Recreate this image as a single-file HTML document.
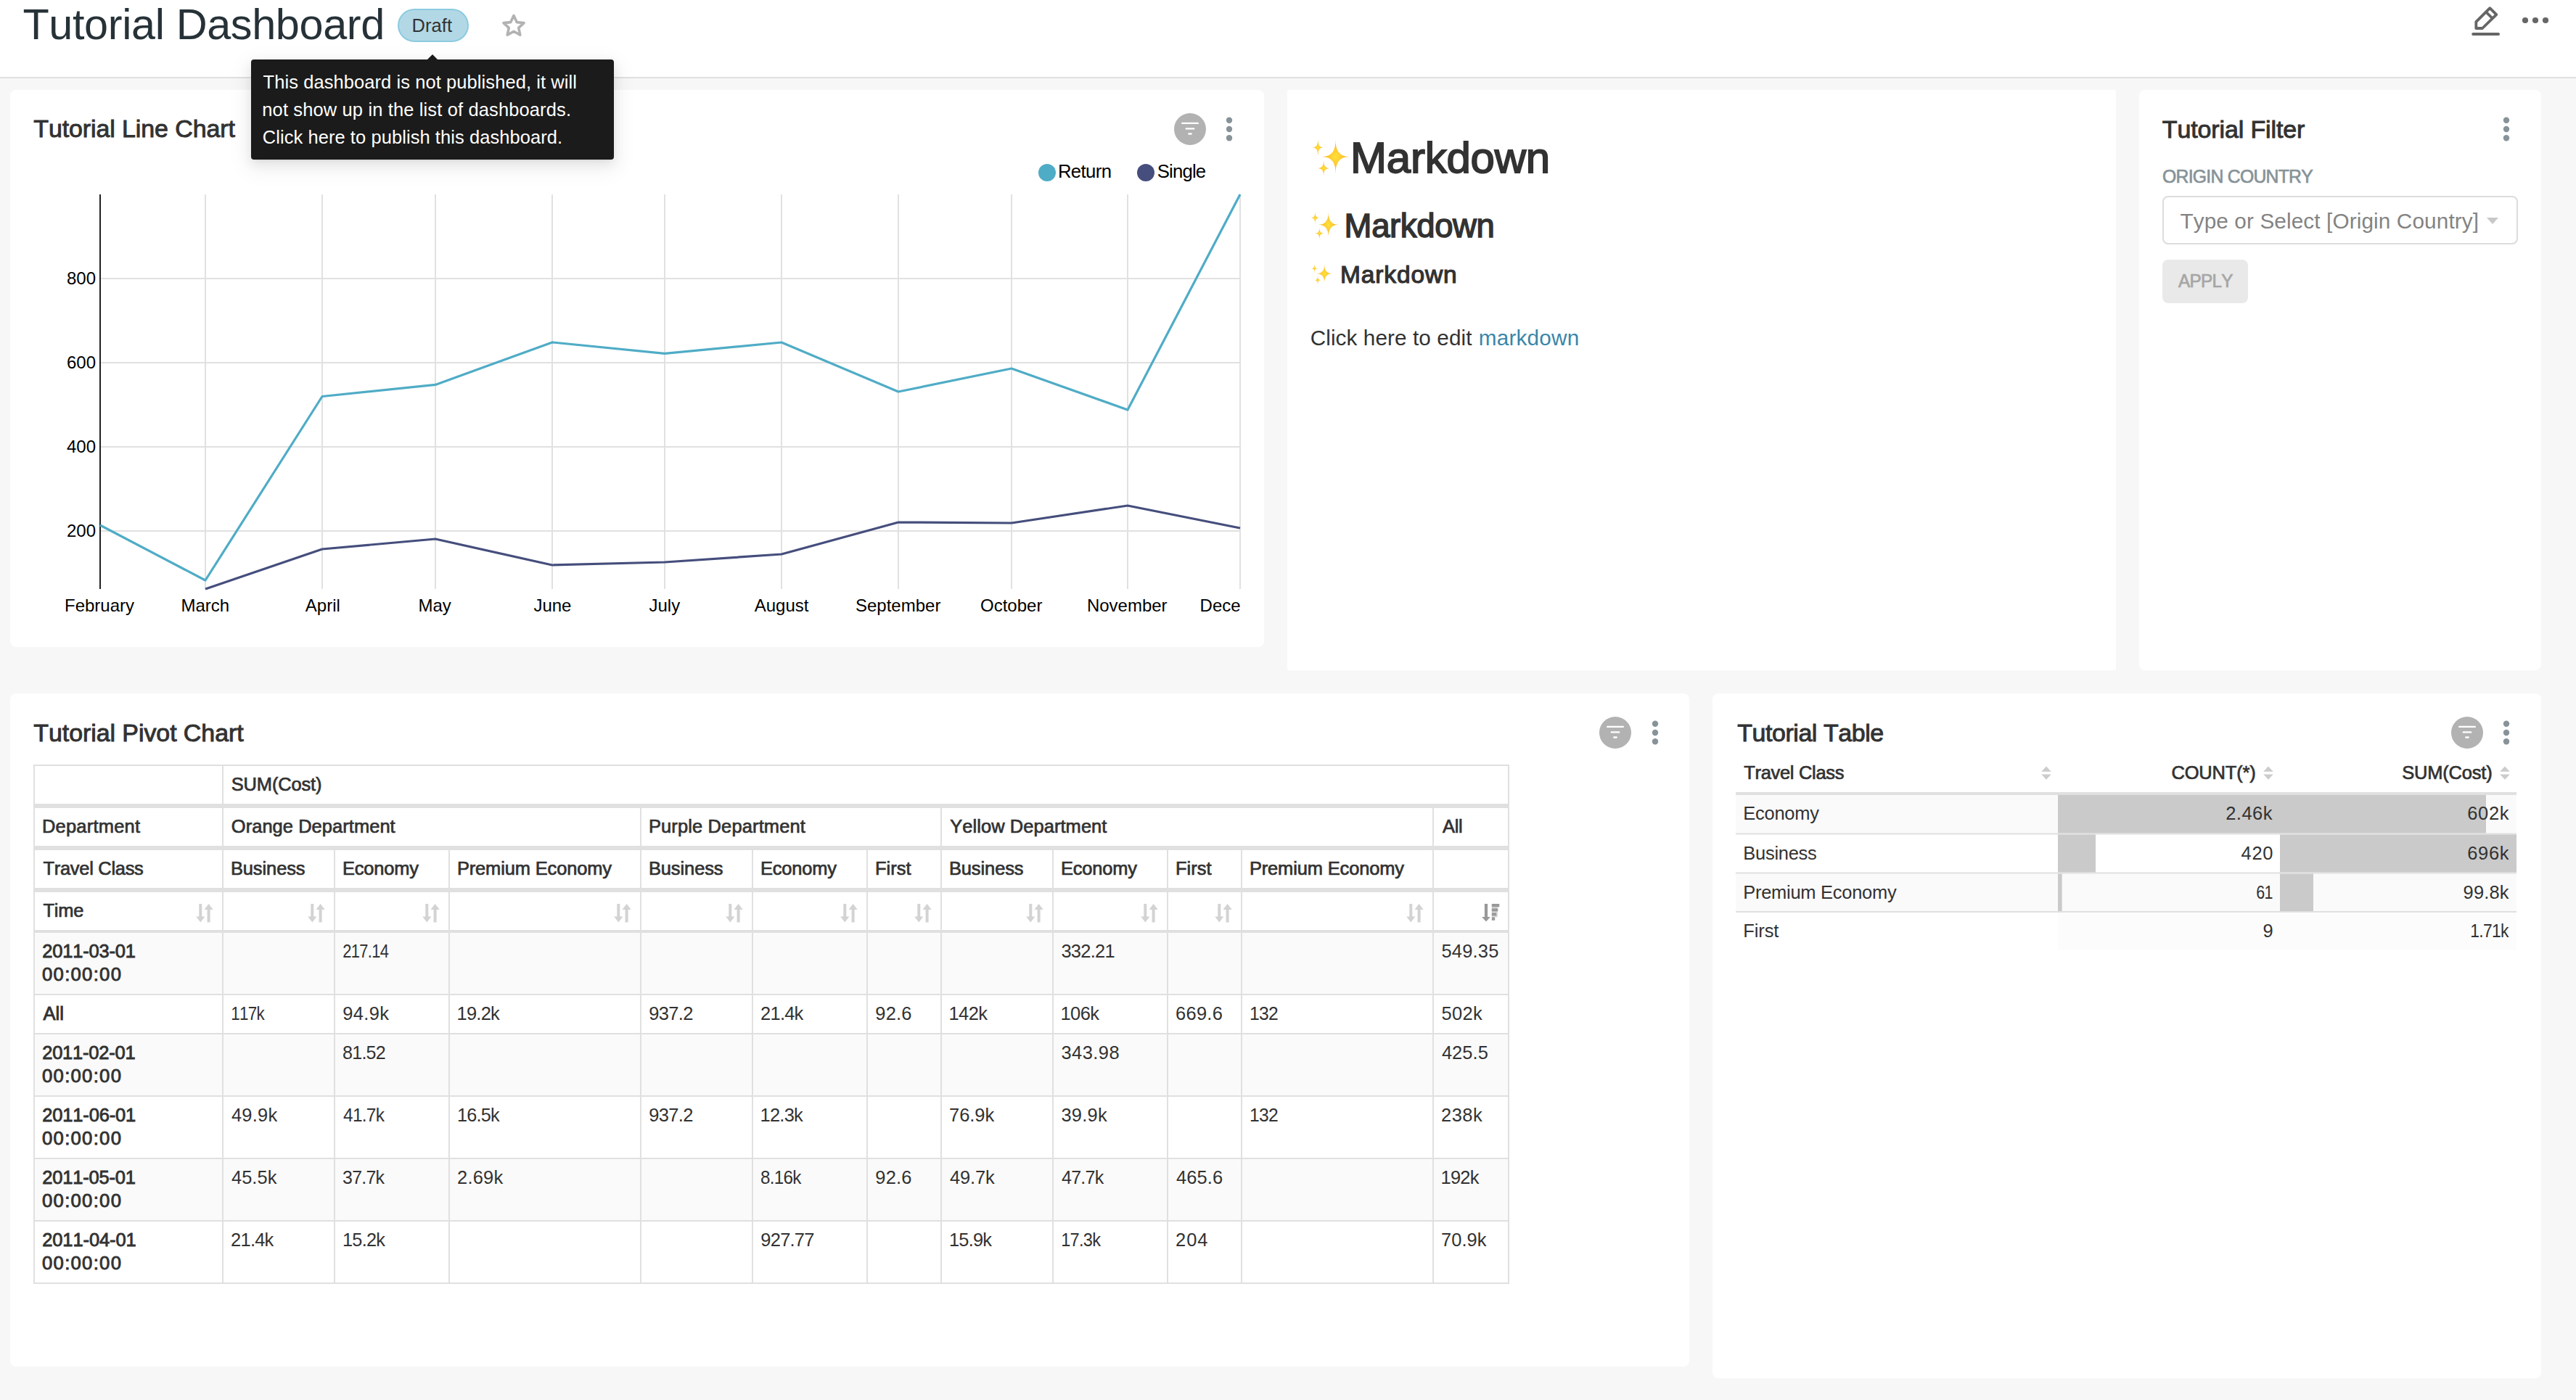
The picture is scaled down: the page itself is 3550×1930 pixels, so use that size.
<!DOCTYPE html>
<html><head><meta charset="utf-8"><title>Tutorial Dashboard</title>
<style>
html,body{margin:0;padding:0;}
body{width:3550px;height:1930px;overflow:hidden;background:#f7f7f7;position:relative;font-family:"Liberation Sans",sans-serif;}
.t{position:absolute;white-space:nowrap;line-height:1;font-family:"Liberation Sans",sans-serif;font-kerning:none;}
.t i{font-style:normal;}
.abs{position:absolute;}
.panel{position:absolute;background:#fff;border-radius:8px;}
svg{position:absolute;overflow:visible;}
</style></head><body>

<div class="abs" style="left:0;top:0;width:3550px;height:106px;background:#fff;border-bottom:2px solid #e0e0e0;"></div>
<div class="t ti" style="left:31.4px;top:3.5px;font-size:59.42px;letter-spacing:-0.37px;color:#263238;">Tutorial Dashboard</div>
<div class="abs" style="left:548px;top:12px;width:94px;height:42px;border-radius:23px;background:#b2d8e6;border:2px solid #8ccbe0;"></div>
<div class="t ti" style="left:567.6px;top:22.5px;font-size:25.47px;letter-spacing:0.05px;color:#323232;">Draft</div>
<svg style="left:688px;top:16px" width="40" height="40" viewBox="0 0 40 40"><path d="M20 5.5 L24.2 14.6 L34 15.6 L26.7 22.3 L28.8 32.2 L20 27.2 L11.2 32.2 L13.3 22.3 L6 15.6 L15.8 14.6 Z" fill="none" stroke="#b2b2b2" stroke-width="3.6" stroke-linejoin="round"/></svg>
<svg style="left:3400px;top:0px" width="60" height="60" viewBox="3400 0 60 60"><path d="M3431.3 11.2 L3440.3 20.2 L3421 39 L3412.3 39 L3412.3 30.2 Z" fill="none" stroke="#666" stroke-width="3.8" stroke-linejoin="round"/><path d="M3426 16.5 L3435 25.5" stroke="#666" stroke-width="3.8"/><path d="M3408.2 47 L3443 47" stroke="#666" stroke-width="4" stroke-linecap="round"/></svg>
<svg style="left:3470px;top:18px" width="50" height="20" viewBox="3470 18 50 20"><circle cx="3480" cy="28" r="4.1" fill="#666"/><circle cx="3494" cy="28" r="4.1" fill="#666"/><circle cx="3508" cy="28" r="4.1" fill="#666"/></svg>
<div class="panel" style="left:14px;top:124px;width:1728px;height:768px;"></div>
<div class="t ti" style="left:46.3px;top:161.3px;font-size:33.95px;letter-spacing:-0.09px;color:#323232;-webkit-text-stroke:0.96px #323232;">Tutorial Line Chart</div>
<svg style="left:1616px;top:154px" width="48" height="48" viewBox="1616 154 48 48"><circle cx="1640" cy="178" r="22" fill="#b2b2b2"/><path d="M1629.2 169.9 H1650.8" stroke="#fff" stroke-width="2.4" stroke-linecap="round"/><path d="M1634.8 177.4 H1645.2" stroke="#fff" stroke-width="2.4" stroke-linecap="round"/><path d="M1638.4 184.5 H1641.6" stroke="#fff" stroke-width="2.4" stroke-linecap="round"/></svg><svg style="left:1686px;top:156px" width="16" height="44" viewBox="1686 156 16 44"><circle cx="1694" cy="165.8" r="4.2" fill="#879399"/><circle cx="1694" cy="178" r="4.2" fill="#879399"/><circle cx="1694" cy="190.2" r="4.2" fill="#879399"/></svg>
<svg style="left:1420px;top:220px" width="260" height="40" viewBox="1420 220 260 40"><circle cx="1443" cy="238" r="12" fill="#4facc6" stroke="#4facc6" stroke-width="0"/><circle cx="1579" cy="238" r="12" fill="#454e7c"/></svg>
<div class="t" style="left:1457.9px;top:224.4px;font-size:25.73px;letter-spacing:-0.61px;font-weight:400;color:#000;">Return</div>
<div class="t" style="left:1594.8px;top:224.4px;font-size:25.73px;letter-spacing:-0.84px;font-weight:400;color:#000;">Single</div>
<svg style="left:0;top:0" width="3550" height="1930" viewBox="0 0 3550 1930"><path d="M283 268 V812" stroke="#e1e1e1" stroke-width="2"/><path d="M444 268 V812" stroke="#e1e1e1" stroke-width="2"/><path d="M600 268 V812" stroke="#e1e1e1" stroke-width="2"/><path d="M761 268 V812" stroke="#e1e1e1" stroke-width="2"/><path d="M916 268 V812" stroke="#e1e1e1" stroke-width="2"/><path d="M1077 268 V812" stroke="#e1e1e1" stroke-width="2"/><path d="M1238 268 V812" stroke="#e1e1e1" stroke-width="2"/><path d="M1394 268 V812" stroke="#e1e1e1" stroke-width="2"/><path d="M1554 268 V812" stroke="#e1e1e1" stroke-width="2"/><path d="M1709 268 V812" stroke="#e1e1e1" stroke-width="2"/><path d="M138 384 H1710" stroke="#e1e1e1" stroke-width="2"/><path d="M138 500 H1710" stroke="#e1e1e1" stroke-width="2"/><path d="M138 616 H1710" stroke="#e1e1e1" stroke-width="2"/><path d="M138 732 H1710" stroke="#e1e1e1" stroke-width="2"/><path d="M138 268 V812" stroke="#222" stroke-width="2"/><polyline points="138,724 283,800 444,546.5 600,530.4 761,471.9 916,487.3 1077,472 1238,540 1394,508 1554,565 1709,268" fill="none" stroke="#4facc6" stroke-width="3.2" stroke-linejoin="round"/><polyline points="283,812 444,757 600,743 761,779 916,775 1077,764 1238,720 1394,721 1554,697 1709,728" fill="none" stroke="#454e7c" stroke-width="3.2" stroke-linejoin="round"/></svg>
<div class="t" style="left:92.0px;top:372.3px;font-size:24.00px;letter-spacing:0.00px;font-weight:400;color:#000;">800</div>
<div class="t" style="left:92.0px;top:488.3px;font-size:24.00px;letter-spacing:0.00px;font-weight:400;color:#000;">600</div>
<div class="t" style="left:92.0px;top:604.3px;font-size:24.00px;letter-spacing:0.00px;font-weight:400;color:#000;">400</div>
<div class="t" style="left:92.0px;top:720.3px;font-size:24.00px;letter-spacing:0.00px;font-weight:400;color:#000;">200</div>
<div class="t" style="left:89.0px;top:822.7px;font-size:24.00px;letter-spacing:0.00px;font-weight:400;color:#000;">February</div>
<div class="t" style="left:249.5px;top:822.7px;font-size:24.00px;letter-spacing:0.00px;font-weight:400;color:#000;">March</div>
<div class="t" style="left:420.8px;top:822.7px;font-size:24.00px;letter-spacing:0.00px;font-weight:400;color:#000;">April</div>
<div class="t" style="left:576.4px;top:822.7px;font-size:24.00px;letter-spacing:0.00px;font-weight:400;color:#000;">May</div>
<div class="t" style="left:735.4px;top:822.7px;font-size:24.00px;letter-spacing:0.00px;font-weight:400;color:#000;">June</div>
<div class="t" style="left:894.5px;top:822.7px;font-size:24.00px;letter-spacing:0.00px;font-weight:400;color:#000;">July</div>
<div class="t" style="left:1039.7px;top:822.7px;font-size:24.00px;letter-spacing:0.00px;font-weight:400;color:#000;">August</div>
<div class="t" style="left:1179.0px;top:822.7px;font-size:24.00px;letter-spacing:0.00px;font-weight:400;color:#000;">September</div>
<div class="t" style="left:1351.0px;top:822.7px;font-size:24.00px;letter-spacing:0.00px;font-weight:400;color:#000;">October</div>
<div class="t" style="left:1497.9px;top:822.7px;font-size:24.00px;letter-spacing:0.00px;font-weight:400;color:#000;">November</div>
<div class="abs" style="left:1600px;top:815px;width:110px;height:40px;overflow:hidden;"><div class="t" style="left:-1600px;margin-left:1653.6px;top:-815px;margin-top:822.7px;font-size:24.00px;letter-spacing:0.00px;font-weight:400;color:#000;">December</div></div>
<div class="panel" style="left:1774px;top:124px;width:1142px;height:800px;border-radius:0;"></div>
<svg style="left:1801px;top:187px" width="60.0" height="56.0" viewBox="0 0 60 56"><defs><radialGradient id="sg1" cx="50%" cy="50%" r="55%"><stop offset="0" stop-color="#ffe03a"/><stop offset="0.55" stop-color="#fcc22d"/><stop offset="1" stop-color="#f7931e"/></radialGradient></defs><path d="M39.6 5.100000000000001 Q39.0 29.82 59.6 29.1 Q39.0 28.380000000000003 39.6 53.1 Q40.2 28.380000000000003 19.6 29.1 Q40.2 29.82 39.6 5.100000000000001 Z" fill="url(#sg1)"/><path d="M15.2 5.300000000000001 Q14.966 16.63 23.0 16.3 Q14.966 15.97 15.2 27.3 Q15.434 15.97 7.3999999999999995 16.3 Q15.434 16.63 15.2 5.300000000000001 Z" fill="url(#sg1)"/><path d="M23.1 34.5 Q22.854000000000003 45.211999999999996 31.3 44.9 Q22.854000000000003 44.588 23.1 55.3 Q23.346 44.588 14.900000000000002 44.9 Q23.346 45.211999999999996 23.1 34.5 Z" fill="url(#sg1)"/></svg>
<div class="t" style="left:1861.1px;top:188.1px;font-size:60.00px;letter-spacing:-0.24px;font-weight:400;color:#323232;-webkit-text-stroke:1.8px #323232;">Markdown</div>
<svg style="left:1801.45px;top:287.95px" width="45.0" height="42.0" viewBox="0 0 60 56"><defs><radialGradient id="sg2" cx="50%" cy="50%" r="55%"><stop offset="0" stop-color="#ffe03a"/><stop offset="0.55" stop-color="#fcc22d"/><stop offset="1" stop-color="#f7931e"/></radialGradient></defs><path d="M39.6 5.100000000000001 Q39.0 29.82 59.6 29.1 Q39.0 28.380000000000003 39.6 53.1 Q40.2 28.380000000000003 19.6 29.1 Q40.2 29.82 39.6 5.100000000000001 Z" fill="url(#sg2)"/><path d="M15.2 5.300000000000001 Q14.966 16.63 23.0 16.3 Q14.966 15.97 15.2 27.3 Q15.434 15.97 7.3999999999999995 16.3 Q15.434 16.63 15.2 5.300000000000001 Z" fill="url(#sg2)"/><path d="M23.1 34.5 Q22.854000000000003 45.211999999999996 31.3 44.9 Q22.854000000000003 44.588 23.1 55.3 Q23.346 44.588 14.900000000000002 44.9 Q23.346 45.211999999999996 23.1 34.5 Z" fill="url(#sg2)"/></svg>
<div class="t" style="left:1852.6px;top:288.5px;font-size:45.50px;letter-spacing:-0.37px;font-weight:400;color:#323232;-webkit-text-stroke:1.5px #323232;">Markdown</div>
<svg style="left:1802.9px;top:361px" width="33.6" height="31.360000000000003" viewBox="0 0 60 56"><defs><radialGradient id="sg3" cx="50%" cy="50%" r="55%"><stop offset="0" stop-color="#ffe03a"/><stop offset="0.55" stop-color="#fcc22d"/><stop offset="1" stop-color="#f7931e"/></radialGradient></defs><path d="M39.6 5.100000000000001 Q39.0 29.82 59.6 29.1 Q39.0 28.380000000000003 39.6 53.1 Q40.2 28.380000000000003 19.6 29.1 Q40.2 29.82 39.6 5.100000000000001 Z" fill="url(#sg3)"/><path d="M15.2 5.300000000000001 Q14.966 16.63 23.0 16.3 Q14.966 15.97 15.2 27.3 Q15.434 15.97 7.3999999999999995 16.3 Q15.434 16.63 15.2 5.300000000000001 Z" fill="url(#sg3)"/><path d="M23.1 34.5 Q22.854000000000003 45.211999999999996 31.3 44.9 Q22.854000000000003 44.588 23.1 55.3 Q23.346 44.588 14.900000000000002 44.9 Q23.346 45.211999999999996 23.1 34.5 Z" fill="url(#sg3)"/></svg>
<div class="t" style="left:1846.9px;top:361.6px;font-size:33.50px;letter-spacing:0.89px;font-weight:400;color:#323232;-webkit-text-stroke:1.2px #323232;">Markdown</div>
<div class="t ti" style="left:1805.7px;top:451.1px;font-size:29.71px;letter-spacing:0.09px;color:#323232;">Click here to edit</div>
<div class="t ti" style="left:2037.7px;top:451.1px;font-size:29.71px;letter-spacing:0.23px;color:#3b86a8;">markdown</div>
<div class="panel" style="left:2948px;top:124px;width:554px;height:800px;"></div>
<div class="t ti" style="left:2979.8px;top:161.8px;font-size:33.95px;letter-spacing:-0.10px;color:#323232;-webkit-text-stroke:0.96px #323232;">Tutorial Filter</div>
<svg style="left:3446px;top:156px" width="16" height="44" viewBox="3446 156 16 44"><circle cx="3454" cy="165.8" r="4.2" fill="#879399"/><circle cx="3454" cy="178" r="4.2" fill="#879399"/><circle cx="3454" cy="190.2" r="4.2" fill="#879399"/></svg>
<div class="t ti" style="left:2979.7px;top:230.9px;font-size:25.47px;letter-spacing:-0.76px;color:#879399;-webkit-text-stroke:0.72px #879399;transform:scaleX(0.9718);transform-origin:1.1px 0;">ORIGIN COUNTRY</div>
<div class="abs" style="left:2980px;top:270px;width:486px;height:63px;border:2px solid #dcdcdc;border-radius:8px;background:#fff;"></div>
<div class="t ti" style="left:3004.4px;top:289.6px;font-size:29.71px;letter-spacing:0.13px;color:#838383;">Type or Select [Origin Country]</div>
<svg style="left:3420px;top:295px" width="30" height="20" viewBox="3420 295 30 20"><path d="M3427 300 H3443 L3435 309 Z" fill="#c8c8c8"/></svg>
<div class="abs" style="left:2980px;top:358px;width:118px;height:60px;border-radius:8px;background:#e9e9e9;"></div>
<div class="t ti" style="left:3002.3px;top:374.9px;font-size:25.47px;letter-spacing:-0.76px;color:#a6a6a6;-webkit-text-stroke:0.72px #a6a6a6;transform:scaleX(0.9533);transform-origin:0.0px 0;">APPLY</div>
<div class="panel" style="left:14px;top:956px;width:2314px;height:928px;"></div>
<div class="t ti" style="left:46.3px;top:994.0px;font-size:33.95px;letter-spacing:-0.06px;color:#323232;-webkit-text-stroke:0.96px #323232;">Tutorial Pivot Chart</div>
<svg style="left:2202px;top:986px" width="48" height="48" viewBox="2202 986 48 48"><circle cx="2226" cy="1010" r="22" fill="#b2b2b2"/><path d="M2215.2 1001.9 H2236.8" stroke="#fff" stroke-width="2.4" stroke-linecap="round"/><path d="M2220.8 1009.4 H2231.2" stroke="#fff" stroke-width="2.4" stroke-linecap="round"/><path d="M2224.4 1016.5 H2227.6" stroke="#fff" stroke-width="2.4" stroke-linecap="round"/></svg><svg style="left:2272.5px;top:988px" width="16" height="44" viewBox="2272.5 988 16 44"><circle cx="2280.5" cy="997.8" r="4.2" fill="#879399"/><circle cx="2280.5" cy="1010" r="4.2" fill="#879399"/><circle cx="2280.5" cy="1022.2" r="4.2" fill="#879399"/></svg>
<svg style="left:0;top:0" width="3550" height="1930" viewBox="0 0 3550 1930"><rect x="47" y="1286" width="2032" height="84" fill="#fafafa"/><rect x="47" y="1372" width="2032" height="52" fill="#fff"/><rect x="47" y="1426" width="2032" height="84" fill="#fafafa"/><rect x="47" y="1512" width="2032" height="84" fill="#fff"/><rect x="47" y="1598" width="2032" height="84" fill="#fafafa"/><rect x="47" y="1684" width="2032" height="84" fill="#fff"/><rect x="47" y="1055" width="2032" height="714" fill="none" stroke="#e0e0e0" stroke-width="2"/><rect x="46" y="1108" width="2034" height="6" fill="#e0e0e0"/><rect x="46" y="1166" width="2034" height="6" fill="#e0e0e0"/><rect x="46" y="1224" width="2034" height="6" fill="#e0e0e0"/><rect x="46" y="1282" width="2034" height="4" fill="#e0e0e0"/><rect x="46" y="1370" width="2034" height="2" fill="#e0e0e0"/><rect x="46" y="1424" width="2034" height="2" fill="#e0e0e0"/><rect x="46" y="1510" width="2034" height="2" fill="#e0e0e0"/><rect x="46" y="1596" width="2034" height="2" fill="#e0e0e0"/><rect x="46" y="1682" width="2034" height="2" fill="#e0e0e0"/><rect x="306" y="1055" width="2" height="715" fill="#e0e0e0"/><rect x="882" y="1108" width="2" height="662" fill="#e0e0e0"/><rect x="1296" y="1108" width="2" height="662" fill="#e0e0e0"/><rect x="1974" y="1108" width="2" height="662" fill="#e0e0e0"/><rect x="460" y="1166" width="2" height="604" fill="#e0e0e0"/><rect x="618" y="1166" width="2" height="604" fill="#e0e0e0"/><rect x="1036" y="1166" width="2" height="604" fill="#e0e0e0"/><rect x="1194" y="1166" width="2" height="604" fill="#e0e0e0"/><rect x="1450" y="1166" width="2" height="604" fill="#e0e0e0"/><rect x="1608" y="1166" width="2" height="604" fill="#e0e0e0"/><rect x="1710" y="1166" width="2" height="604" fill="#e0e0e0"/></svg>
<div class="t ti" style="left:318.8px;top:1068.6px;font-size:25.47px;letter-spacing:-0.17px;color:#323232;-webkit-text-stroke:0.72px #323232;">SUM(Cost)</div>
<div class="t ti" style="left:57.9px;top:1126.6px;font-size:25.47px;letter-spacing:0.23px;color:#323232;-webkit-text-stroke:0.72px #323232;">Department</div>
<div class="t ti" style="left:318.8px;top:1126.6px;font-size:25.47px;letter-spacing:0.05px;color:#323232;-webkit-text-stroke:0.72px #323232;">Orange Department</div>
<div class="t ti" style="left:893.9px;top:1126.6px;font-size:25.47px;letter-spacing:0.14px;color:#323232;-webkit-text-stroke:0.72px #323232;">Purple Department</div>
<div class="t ti" style="left:1309.3px;top:1126.6px;font-size:25.47px;letter-spacing:0.06px;color:#323232;-webkit-text-stroke:0.72px #323232;">Yellow Department</div>
<div class="t ti" style="left:1988.0px;top:1126.6px;font-size:25.47px;letter-spacing:-0.29px;color:#323232;-webkit-text-stroke:0.72px #323232;">All</div>
<div class="t ti" style="left:59.5px;top:1184.6px;font-size:25.47px;letter-spacing:-0.29px;color:#323232;-webkit-text-stroke:0.72px #323232;">Travel Class</div>
<div class="t ti" style="left:317.9px;top:1184.6px;font-size:25.47px;letter-spacing:-0.09px;color:#323232;-webkit-text-stroke:0.72px #323232;">Business</div>
<div class="t ti" style="left:471.9px;top:1184.6px;font-size:25.47px;letter-spacing:-0.16px;color:#323232;-webkit-text-stroke:0.72px #323232;">Economy</div>
<div class="t ti" style="left:629.9px;top:1184.6px;font-size:25.47px;letter-spacing:-0.14px;color:#323232;-webkit-text-stroke:0.72px #323232;">Premium Economy</div>
<div class="t ti" style="left:893.9px;top:1184.6px;font-size:25.47px;letter-spacing:-0.09px;color:#323232;-webkit-text-stroke:0.72px #323232;">Business</div>
<div class="t ti" style="left:1047.9px;top:1184.6px;font-size:25.47px;letter-spacing:-0.16px;color:#323232;-webkit-text-stroke:0.72px #323232;">Economy</div>
<div class="t ti" style="left:1205.9px;top:1184.6px;font-size:25.47px;letter-spacing:0.03px;color:#323232;-webkit-text-stroke:0.72px #323232;">First</div>
<div class="t ti" style="left:1307.9px;top:1184.6px;font-size:25.47px;letter-spacing:-0.09px;color:#323232;-webkit-text-stroke:0.72px #323232;">Business</div>
<div class="t ti" style="left:1461.9px;top:1184.6px;font-size:25.47px;letter-spacing:-0.16px;color:#323232;-webkit-text-stroke:0.72px #323232;">Economy</div>
<div class="t ti" style="left:1619.9px;top:1184.6px;font-size:25.47px;letter-spacing:0.03px;color:#323232;-webkit-text-stroke:0.72px #323232;">First</div>
<div class="t ti" style="left:1721.9px;top:1184.6px;font-size:25.47px;letter-spacing:-0.14px;color:#323232;-webkit-text-stroke:0.72px #323232;">Premium Economy</div>
<div class="t ti" style="left:59.5px;top:1242.6px;font-size:25.47px;letter-spacing:-0.24px;color:#323232;-webkit-text-stroke:0.72px #323232;">Time</div>
<svg style="left:270px;top:1245.5px" width="24" height="26" viewBox="0 0 24 26"><path d="M4.3 0 H8.3 V17.5 H12.4 L6.3 25.5 L0.2 17.5 H4.3 Z" fill="#d3d3d3"/><path d="M15.6 25.5 H19.6 V8 H23.7 L17.6 0 L11.5 8 H15.6 Z" fill="#d3d3d3"/></svg>
<svg style="left:424px;top:1245.5px" width="24" height="26" viewBox="0 0 24 26"><path d="M4.3 0 H8.3 V17.5 H12.4 L6.3 25.5 L0.2 17.5 H4.3 Z" fill="#d3d3d3"/><path d="M15.6 25.5 H19.6 V8 H23.7 L17.6 0 L11.5 8 H15.6 Z" fill="#d3d3d3"/></svg>
<svg style="left:582px;top:1245.5px" width="24" height="26" viewBox="0 0 24 26"><path d="M4.3 0 H8.3 V17.5 H12.4 L6.3 25.5 L0.2 17.5 H4.3 Z" fill="#d3d3d3"/><path d="M15.6 25.5 H19.6 V8 H23.7 L17.6 0 L11.5 8 H15.6 Z" fill="#d3d3d3"/></svg>
<svg style="left:846px;top:1245.5px" width="24" height="26" viewBox="0 0 24 26"><path d="M4.3 0 H8.3 V17.5 H12.4 L6.3 25.5 L0.2 17.5 H4.3 Z" fill="#d3d3d3"/><path d="M15.6 25.5 H19.6 V8 H23.7 L17.6 0 L11.5 8 H15.6 Z" fill="#d3d3d3"/></svg>
<svg style="left:1000px;top:1245.5px" width="24" height="26" viewBox="0 0 24 26"><path d="M4.3 0 H8.3 V17.5 H12.4 L6.3 25.5 L0.2 17.5 H4.3 Z" fill="#d3d3d3"/><path d="M15.6 25.5 H19.6 V8 H23.7 L17.6 0 L11.5 8 H15.6 Z" fill="#d3d3d3"/></svg>
<svg style="left:1158px;top:1245.5px" width="24" height="26" viewBox="0 0 24 26"><path d="M4.3 0 H8.3 V17.5 H12.4 L6.3 25.5 L0.2 17.5 H4.3 Z" fill="#d3d3d3"/><path d="M15.6 25.5 H19.6 V8 H23.7 L17.6 0 L11.5 8 H15.6 Z" fill="#d3d3d3"/></svg>
<svg style="left:1260px;top:1245.5px" width="24" height="26" viewBox="0 0 24 26"><path d="M4.3 0 H8.3 V17.5 H12.4 L6.3 25.5 L0.2 17.5 H4.3 Z" fill="#d3d3d3"/><path d="M15.6 25.5 H19.6 V8 H23.7 L17.6 0 L11.5 8 H15.6 Z" fill="#d3d3d3"/></svg>
<svg style="left:1414px;top:1245.5px" width="24" height="26" viewBox="0 0 24 26"><path d="M4.3 0 H8.3 V17.5 H12.4 L6.3 25.5 L0.2 17.5 H4.3 Z" fill="#d3d3d3"/><path d="M15.6 25.5 H19.6 V8 H23.7 L17.6 0 L11.5 8 H15.6 Z" fill="#d3d3d3"/></svg>
<svg style="left:1572px;top:1245.5px" width="24" height="26" viewBox="0 0 24 26"><path d="M4.3 0 H8.3 V17.5 H12.4 L6.3 25.5 L0.2 17.5 H4.3 Z" fill="#d3d3d3"/><path d="M15.6 25.5 H19.6 V8 H23.7 L17.6 0 L11.5 8 H15.6 Z" fill="#d3d3d3"/></svg>
<svg style="left:1674px;top:1245.5px" width="24" height="26" viewBox="0 0 24 26"><path d="M4.3 0 H8.3 V17.5 H12.4 L6.3 25.5 L0.2 17.5 H4.3 Z" fill="#d3d3d3"/><path d="M15.6 25.5 H19.6 V8 H23.7 L17.6 0 L11.5 8 H15.6 Z" fill="#d3d3d3"/></svg>
<svg style="left:1938px;top:1245.5px" width="24" height="26" viewBox="0 0 24 26"><path d="M4.3 0 H8.3 V17.5 H12.4 L6.3 25.5 L0.2 17.5 H4.3 Z" fill="#d3d3d3"/><path d="M15.6 25.5 H19.6 V8 H23.7 L17.6 0 L11.5 8 H15.6 Z" fill="#d3d3d3"/></svg>
<svg style="left:2042px;top:1245.6px" width="26" height="26" viewBox="0 0 26 26"><path d="M3.9 0 H8.1 V18 H11.9 L6 24.6 L0.1 18 H3.9 Z" fill="#999"/><rect x="13.8" y="4.4" width="8" height="14" fill="#d6d6d6"/><rect x="13.8" y="0" width="10.5" height="4.4" fill="#999"/><rect x="13.8" y="6.4" width="8.5" height="4" fill="#999"/><rect x="13.8" y="12.4" width="6.4" height="4" fill="#999"/><rect x="13.8" y="18.4" width="4.4" height="4.4" fill="#999"/></svg>
<div class="t ti" style="left:58.2px;top:1298.7px;font-size:25.47px;letter-spacing:-0.16px;color:#323232;-webkit-text-stroke:0.89px #323232;">2011-03-01</div>
<div class="t ti" style="left:58.4px;top:1330.7px;font-size:25.47px;letter-spacing:1.27px;color:#323232;-webkit-text-stroke:0.89px #323232;transform:scaleX(1.0087);transform-origin:1.0px 0;">00:00:00</div>
<div class="t ti" style="left:472.1px;top:1298.7px;font-size:25.47px;letter-spacing:-0.76px;color:#323232;transform:scaleX(0.8588);transform-origin:1.3px 0;">217.14</div>
<div class="t ti" style="left:1462.4px;top:1298.7px;font-size:25.47px;letter-spacing:-0.74px;color:#323232;">332.21</div>
<div class="t ti" style="left:1986.4px;top:1298.7px;font-size:25.47px;letter-spacing:0.21px;color:#323232;">549.35</div>
<div class="t ti" style="left:59.4px;top:1384.7px;font-size:25.47px;letter-spacing:0.16px;color:#323232;-webkit-text-stroke:0.89px #323232;">All</div>
<div class="t ti" style="left:317.5px;top:1384.7px;font-size:25.47px;letter-spacing:-0.76px;color:#323232;transform:scaleX(0.8787);transform-origin:1.9px 0;">117k</div>
<div class="t ti" style="left:472.3px;top:1384.7px;font-size:25.47px;letter-spacing:0.37px;color:#323232;">94.9k</div>
<div class="t ti" style="left:629.5px;top:1384.7px;font-size:25.47px;letter-spacing:-0.75px;color:#323232;">19.2k</div>
<div class="t ti" style="left:894.3px;top:1384.7px;font-size:25.47px;letter-spacing:-0.64px;color:#323232;">937.2</div>
<div class="t ti" style="left:1048.1px;top:1384.7px;font-size:25.47px;letter-spacing:-0.76px;color:#323232;">21.4k</div>
<div class="t ti" style="left:1206.3px;top:1384.7px;font-size:25.47px;letter-spacing:0.17px;color:#323232;">92.6</div>
<div class="t ti" style="left:1307.5px;top:1384.7px;font-size:25.47px;letter-spacing:-0.54px;color:#323232;">142k</div>
<div class="t ti" style="left:1461.5px;top:1384.7px;font-size:25.47px;letter-spacing:-0.59px;color:#323232;">106k</div>
<div class="t ti" style="left:1620.1px;top:1384.7px;font-size:25.47px;letter-spacing:0.25px;color:#323232;">669.6</div>
<div class="t ti" style="left:1721.5px;top:1384.7px;font-size:25.47px;letter-spacing:-0.76px;color:#323232;transform:scaleX(0.9674);transform-origin:1.9px 0;">132</div>
<div class="t ti" style="left:1986.4px;top:1384.7px;font-size:25.47px;letter-spacing:0.40px;color:#323232;">502k</div>
<div class="t ti" style="left:58.2px;top:1438.7px;font-size:25.47px;letter-spacing:-0.20px;color:#323232;-webkit-text-stroke:0.89px #323232;">2011-02-01</div>
<div class="t ti" style="left:58.4px;top:1470.7px;font-size:25.47px;letter-spacing:1.27px;color:#323232;-webkit-text-stroke:0.89px #323232;transform:scaleX(1.0087);transform-origin:1.0px 0;">00:00:00</div>
<div class="t ti" style="left:472.3px;top:1438.7px;font-size:25.47px;letter-spacing:-0.76px;color:#323232;transform:scaleX(0.9832);transform-origin:1.1px 0;">81.52</div>
<div class="t ti" style="left:1462.4px;top:1438.7px;font-size:25.47px;letter-spacing:0.47px;color:#323232;">343.98</div>
<div class="t ti" style="left:1986.9px;top:1438.7px;font-size:25.47px;letter-spacing:0.06px;color:#323232;">425.5</div>
<div class="t ti" style="left:58.2px;top:1524.7px;font-size:25.47px;letter-spacing:-0.14px;color:#323232;-webkit-text-stroke:0.89px #323232;">2011-06-01</div>
<div class="t ti" style="left:58.4px;top:1556.7px;font-size:25.47px;letter-spacing:1.27px;color:#323232;-webkit-text-stroke:0.89px #323232;transform:scaleX(1.0087);transform-origin:1.0px 0;">00:00:00</div>
<div class="t ti" style="left:318.9px;top:1524.7px;font-size:25.47px;letter-spacing:0.25px;color:#323232;">49.9k</div>
<div class="t ti" style="left:472.9px;top:1524.7px;font-size:25.47px;letter-spacing:-0.76px;color:#323232;transform:scaleX(0.9602);transform-origin:0.5px 0;">41.7k</div>
<div class="t ti" style="left:629.5px;top:1524.7px;font-size:25.47px;letter-spacing:-0.76px;color:#323232;transform:scaleX(0.9900);transform-origin:1.9px 0;">16.5k</div>
<div class="t ti" style="left:894.3px;top:1524.7px;font-size:25.47px;letter-spacing:-0.64px;color:#323232;">937.2</div>
<div class="t ti" style="left:1047.5px;top:1524.7px;font-size:25.47px;letter-spacing:-0.76px;color:#323232;">12.3k</div>
<div class="t ti" style="left:1308.1px;top:1524.7px;font-size:25.47px;letter-spacing:-0.07px;color:#323232;">76.9k</div>
<div class="t ti" style="left:1462.4px;top:1524.7px;font-size:25.47px;letter-spacing:0.23px;color:#323232;">39.9k</div>
<div class="t ti" style="left:1721.5px;top:1524.7px;font-size:25.47px;letter-spacing:-0.76px;color:#323232;transform:scaleX(0.9674);transform-origin:1.9px 0;">132</div>
<div class="t ti" style="left:1986.1px;top:1524.7px;font-size:25.47px;letter-spacing:0.44px;color:#323232;">238k</div>
<div class="t ti" style="left:58.2px;top:1610.7px;font-size:25.47px;letter-spacing:-0.18px;color:#323232;-webkit-text-stroke:0.89px #323232;">2011-05-01</div>
<div class="t ti" style="left:58.4px;top:1642.7px;font-size:25.47px;letter-spacing:1.27px;color:#323232;-webkit-text-stroke:0.89px #323232;transform:scaleX(1.0087);transform-origin:1.0px 0;">00:00:00</div>
<div class="t ti" style="left:318.9px;top:1610.7px;font-size:25.47px;letter-spacing:0.07px;color:#323232;">45.5k</div>
<div class="t ti" style="left:472.4px;top:1610.7px;font-size:25.47px;letter-spacing:-0.76px;color:#323232;transform:scaleX(0.9789);transform-origin:1.0px 0;">37.7k</div>
<div class="t ti" style="left:630.1px;top:1610.7px;font-size:25.47px;letter-spacing:0.20px;color:#323232;">2.69k</div>
<div class="t ti" style="left:1048.3px;top:1610.7px;font-size:25.47px;letter-spacing:-0.76px;color:#323232;transform:scaleX(0.9501);transform-origin:1.1px 0;">8.16k</div>
<div class="t ti" style="left:1206.3px;top:1610.7px;font-size:25.47px;letter-spacing:0.17px;color:#323232;">92.6</div>
<div class="t ti" style="left:1308.9px;top:1610.7px;font-size:25.47px;letter-spacing:-0.11px;color:#323232;">49.7k</div>
<div class="t ti" style="left:1462.9px;top:1610.7px;font-size:25.47px;letter-spacing:-0.76px;color:#323232;transform:scaleX(0.9807);transform-origin:0.5px 0;">47.7k</div>
<div class="t ti" style="left:1620.9px;top:1610.7px;font-size:25.47px;letter-spacing:0.12px;color:#323232;">465.6</div>
<div class="t ti" style="left:1985.5px;top:1610.7px;font-size:25.47px;letter-spacing:-0.76px;color:#323232;">192k</div>
<div class="t ti" style="left:58.2px;top:1696.7px;font-size:25.47px;letter-spacing:-0.08px;color:#323232;-webkit-text-stroke:0.89px #323232;">2011-04-01</div>
<div class="t ti" style="left:58.4px;top:1728.7px;font-size:25.47px;letter-spacing:1.27px;color:#323232;-webkit-text-stroke:0.89px #323232;transform:scaleX(1.0087);transform-origin:1.0px 0;">00:00:00</div>
<div class="t ti" style="left:318.1px;top:1696.7px;font-size:25.47px;letter-spacing:-0.76px;color:#323232;">21.4k</div>
<div class="t ti" style="left:471.5px;top:1696.7px;font-size:25.47px;letter-spacing:-0.76px;color:#323232;transform:scaleX(0.9941);transform-origin:1.9px 0;">15.2k</div>
<div class="t ti" style="left:1048.3px;top:1696.7px;font-size:25.47px;letter-spacing:-0.75px;color:#323232;">927.77</div>
<div class="t ti" style="left:1307.5px;top:1696.7px;font-size:25.47px;letter-spacing:-0.76px;color:#323232;transform:scaleX(0.9962);transform-origin:1.9px 0;">15.9k</div>
<div class="t ti" style="left:1461.5px;top:1696.7px;font-size:25.47px;letter-spacing:-0.76px;color:#323232;transform:scaleX(0.9272);transform-origin:1.9px 0;">17.3k</div>
<div class="t ti" style="left:1620.1px;top:1696.7px;font-size:25.47px;letter-spacing:0.87px;color:#323232;">204</div>
<div class="t ti" style="left:1986.1px;top:1696.7px;font-size:25.47px;letter-spacing:0.01px;color:#323232;">70.9k</div>
<div class="panel" style="left:2360px;top:956px;width:1142px;height:944px;"></div>
<div class="t ti" style="left:2394.2px;top:994.1px;font-size:33.95px;letter-spacing:-0.42px;color:#323232;-webkit-text-stroke:0.96px #323232;">Tutorial Table</div>
<svg style="left:3376px;top:986px" width="48" height="48" viewBox="3376 986 48 48"><circle cx="3400" cy="1010" r="22" fill="#b2b2b2"/><path d="M3389.2 1001.9 H3410.8" stroke="#fff" stroke-width="2.4" stroke-linecap="round"/><path d="M3394.8 1009.4 H3405.2" stroke="#fff" stroke-width="2.4" stroke-linecap="round"/><path d="M3398.4 1016.5 H3401.6" stroke="#fff" stroke-width="2.4" stroke-linecap="round"/></svg><svg style="left:3446px;top:988px" width="16" height="44" viewBox="3446 988 16 44"><circle cx="3454" cy="997.8" r="4.2" fill="#879399"/><circle cx="3454" cy="1010" r="4.2" fill="#879399"/><circle cx="3454" cy="1022.2" r="4.2" fill="#879399"/></svg>
<svg style="left:0;top:0" width="3550" height="1930" viewBox="0 0 3550 1930"><rect x="2392" y="1096" width="1076" height="52.5" fill="#fafafa"/><rect x="2392" y="1150.5" width="1076" height="52.0" fill="#fff"/><rect x="2392" y="1204.5" width="1076" height="51.5" fill="#fafafa"/><rect x="2392" y="1258" width="1076" height="51.5" fill="#fff"/><rect x="2392" y="1092" width="1076" height="4" fill="#e0e0e0"/><rect x="2392" y="1148.5" width="1076" height="2" fill="#e0e0e0"/><rect x="2392" y="1202.5" width="1076" height="2" fill="#e0e0e0"/><rect x="2392" y="1256" width="1076" height="2" fill="#e0e0e0"/><rect x="2836" y="1258" width="632" height="51.5" fill="#fcfcfc"/><rect x="2836" y="1096" width="306" height="52.5" fill="#cacaca"/><rect x="3142" y="1096" width="284" height="52.5" fill="#cacaca"/><rect x="2836" y="1150.5" width="52" height="52.0" fill="#cacaca"/><rect x="3142" y="1150.5" width="326" height="52.0" fill="#cacaca"/><rect x="2836" y="1204.5" width="5.699999999999818" height="51.5" fill="#cacaca"/><rect x="3142" y="1204.5" width="46" height="51.5" fill="#cacaca"/><rect x="2836" y="1258" width="0" height="51.5" fill="#cacaca"/><rect x="3142" y="1258" width="0" height="51.5" fill="#cacaca"/></svg>
<div class="t ti" style="left:2403.2px;top:1053.3px;font-size:25.47px;letter-spacing:-0.29px;color:#323232;-webkit-text-stroke:0.72px #323232;">Travel Class</div>
<div class="t ti" style="left:2992.4px;top:1053.3px;font-size:25.47px;letter-spacing:-0.15px;color:#323232;-webkit-text-stroke:0.72px #323232;">COUNT(*)</div>
<div class="t ti" style="left:3310.2px;top:1053.3px;font-size:25.47px;letter-spacing:-0.17px;color:#323232;-webkit-text-stroke:0.72px #323232;">SUM(Cost)</div>
<svg style="left:2812px;top:1056px" width="16" height="20" viewBox="0 0 16 20"><path d="M8 0.5 L14.8 7.7 H1.2 Z" fill="#cccccc"/><path d="M8 18.8 L14.8 11.6 H1.2 Z" fill="#cccccc"/></svg>
<svg style="left:3118px;top:1056px" width="16" height="20" viewBox="0 0 16 20"><path d="M8 0.5 L14.8 7.7 H1.2 Z" fill="#cccccc"/><path d="M8 18.8 L14.8 11.6 H1.2 Z" fill="#cccccc"/></svg>
<svg style="left:3444px;top:1056px" width="16" height="20" viewBox="0 0 16 20"><path d="M8 0.5 L14.8 7.7 H1.2 Z" fill="#cccccc"/><path d="M8 18.8 L14.8 11.6 H1.2 Z" fill="#cccccc"/></svg>
<div class="t ti" style="left:2402.3px;top:1109.2px;font-size:25.47px;letter-spacing:-0.26px;color:#323232;">Economy</div>
<div class="t ti" style="left:3067.2px;top:1109.2px;font-size:25.47px;letter-spacing:0.50px;color:#323232;">2.46k</div>
<div class="t ti" style="left:3400.2px;top:1109.2px;font-size:25.47px;letter-spacing:0.68px;color:#323232;">602k</div>
<div class="t ti" style="left:2402.3px;top:1163.7px;font-size:25.47px;letter-spacing:-0.26px;color:#323232;">Business</div>
<div class="t ti" style="left:3088.6px;top:1163.7px;font-size:25.47px;letter-spacing:0.68px;color:#323232;">420</div>
<div class="t ti" style="left:3400.2px;top:1163.7px;font-size:25.47px;letter-spacing:0.68px;color:#323232;">696k</div>
<div class="t ti" style="left:2402.3px;top:1217.7px;font-size:25.47px;letter-spacing:-0.27px;color:#323232;">Premium Economy</div>
<div class="t ti" style="left:3109.1px;top:1217.7px;font-size:25.47px;letter-spacing:-0.76px;color:#323232;transform:scaleX(0.8415);transform-origin:1.3px 0;">61</div>
<div class="t ti" style="left:3394.6px;top:1217.7px;font-size:25.47px;letter-spacing:0.16px;color:#323232;">99.8k</div>
<div class="t ti" style="left:2402.3px;top:1271.2px;font-size:25.47px;letter-spacing:-0.09px;color:#323232;">First</div>
<div class="t ti" style="left:3118.4px;top:1271.2px;font-size:25.47px;letter-spacing:0.15px;color:#323232;">9</div>
<div class="t ti" style="left:3404.1px;top:1271.2px;font-size:25.47px;letter-spacing:-0.76px;color:#323232;transform:scaleX(0.8979);transform-origin:1.9px 0;">1.71k</div>
<div class="abs" style="left:346px;top:82px;width:500px;height:138px;background:#1b1b1b;border-radius:4px;box-shadow:0 6px 16px rgba(0,0,0,0.08),0 3px 6px -4px rgba(0,0,0,0.12),0 9px 28px 8px rgba(0,0,0,0.05);z-index:50;"></div>
<svg style="left:586px;top:74px;z-index:51" width="20" height="9" viewBox="0 0 20 9"><path d="M2 9 L10 1 L18 9 Z" fill="#1b1b1b"/></svg>
<div class="t ti" style="left:362.5px;top:101.4px;font-size:25.47px;letter-spacing:0.09px;color:#fff;z-index:52;">This dashboard is not published, it will</div>
<div class="t ti" style="left:361.3px;top:139.4px;font-size:25.47px;letter-spacing:0.14px;color:#fff;z-index:52;">not show up in the list of dashboards.</div>
<div class="t ti" style="left:361.7px;top:177.0px;font-size:25.47px;letter-spacing:0.08px;color:#fff;z-index:52;">Click here to publish this dashboard.</div>
</body></html>
